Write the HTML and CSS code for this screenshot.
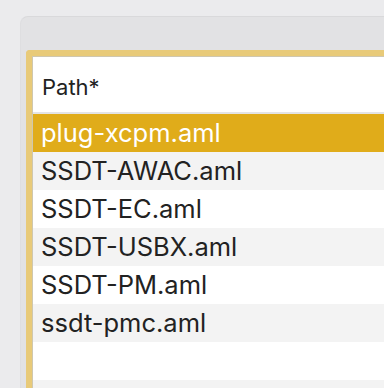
FILE: index.html
```html
<!DOCTYPE html>
<html>
<head>
<meta charset="utf-8">
<link rel="stylesheet" href="styles.css">
</head>
<body>
<div class="panel">
  <div class="frame">
    <div class="table">
      <div class="header">Path*</div>
      <div class="row selected">plug-xcpm.aml</div>
      <div class="row alt">SSDT-AWAC.aml</div>
      <div class="row">SSDT-EC.aml</div>
      <div class="row alt">SSDT-USBX.aml</div>
      <div class="row">SSDT-PM.aml</div>
      <div class="row alt">ssdt-pmc.aml</div>
      <div class="row"></div>
      <div class="row alt short"></div>
    </div>
  </div>
</div>
</body>
</html>
```
FILE: styles.css
```css
html, body {
  margin: 0;
  padding: 0;
  width: 384px;
  height: 388px;
  overflow: hidden;
  background: #ebebed;
  font-family: Inter, "Liberation Sans", Arial, sans-serif;
}
.panel {
  margin: 16px 0 0 20px;
  width: 364px;
  height: 372px;
  overflow: hidden;
  background: #e2e2e4;
  border-top: 1px solid #d9d9db;
  border-left: 1px solid #dedee0;
  border-radius: 8px 0 0 0;
  padding: 33px 0 0 5px;
  box-sizing: border-box;
}
.frame {
  height: 100%;
  border: 6px solid #e8ca79;
  border-right: none;
  border-bottom: none;
  border-radius: 4px 0 0 0;
  box-sizing: border-box;
  overflow: hidden;
}
.table {
  height: 100%;
  box-sizing: border-box;
  border-top: 1px solid #cfc7ae;
  border-left: 1px solid #cfc7ae;
  background: #ffffff;
}
.header {
  height: 57px;
  box-sizing: border-box;
  border-bottom: 2px solid #e4e4e4;
  padding: 18px 0 0 9px;
  font-size: 22px;
  line-height: 24px;
  color: #222222;
}
.row {
  height: 38px;
  line-height: 38px;
  padding-left: 8px;
  font-size: 25.5px;
  color: #222222;
  background: #ffffff;
}
.row.alt {
  background: #f3f3f3;
}
.row.short {
  height: 8px;
}
.row.selected {
  background: #e0ac1a;
  color: #ffffff;
}
```
